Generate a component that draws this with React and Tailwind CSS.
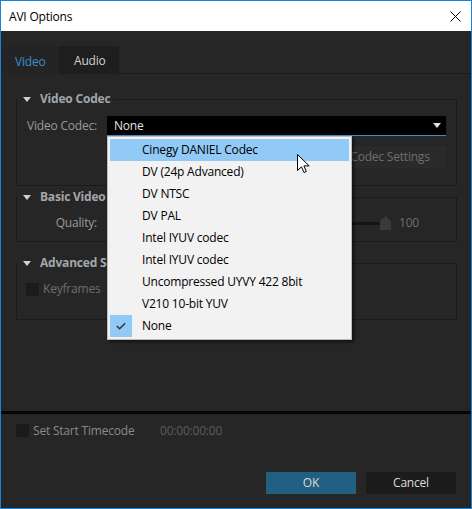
import React from "react";

const items = [
  "Cinegy DANIEL Codec",
  "DV (24p Advanced)",
  "DV NTSC",
  "DV PAL",
  "Intel IYUV codec",
  "Intel IYUV codec",
  "Uncompressed UYVY 422 8bit",
  "V210 10-bit YUV",
  "None",
];

const Tri = ({ className }) => (
  <svg width="8" height="5" viewBox="0 0 8 5" className={className}>
    <path d="M0 0H8L4 5Z" fill="currentColor" />
  </svg>
);

const Section = ({ title, className, children }) => (
  <fieldset className={"ml-[15px] mr-[14px] border border-[#1b1b1b] " + className}>
    <legend className="pl-[6px] pr-[4px]">
      <span className="flex items-center h-[16px] gap-[9px]">
        <Tri className="text-[#d0d0d0]" />
        <span className="font-bold text-[#a3a7ab] leading-[16px] whitespace-nowrap">{title}</span>
      </span>
    </legend>
    {children}
  </fieldset>
);

const Label = ({ children }) => (
  <span className="w-[70px] shrink-0 mr-[10px] text-right whitespace-nowrap text-[#9a9a9a]">{children}</span>
);

export default function App() {
  return (
    <div className="relative w-[472px] h-[509px] border border-[#1883d7] bg-[#262626] flex flex-col font-['Open_Sans',sans-serif] text-[12px] tracking-[-0.2px]">
      {/* title bar */}
      <div className="h-[30px] bg-white flex items-center justify-between pl-[8px] pr-[10px] pt-[1px]">
        <span className="text-black">AVI Options</span>
        <svg width="11" height="11" viewBox="0 0 11 11">
          <path d="M0.5 0.5L10.5 10.5M10.5 0.5L0.5 10.5" stroke="#000" strokeWidth="1" />
        </svg>
      </div>

      {/* tabs */}
      <div className="mt-[15px] flex h-[28px]">
        <div className="w-[59px] bg-[#242424] border-r border-[#1b1b1b] flex items-center pl-[14px] pt-[3px] text-[#3b8ecf]">
          Video
        </div>
        <div className="w-[59px] bg-[#1e1e1e] border-b border-[#1b1b1b] flex items-center pl-[14px] pt-[3px] text-[#d0d0d0]">
          Audio
        </div>
        <div className="flex-1 border-b border-[#1b1b1b]" />
      </div>

      {/* content */}
      <div className="flex-1 pt-[17px]">
        <Section title="Video Codec" className="pb-[17px]">
          <div className="mt-[9px] pl-[10px] mr-[10px] flex items-center h-[20px]">
            <Label>Video Codec:</Label>
            <div className="flex-1 h-[20px] bg-black border-b border-[#3c8cc8] flex items-center justify-between pl-[7px] pr-[5px] text-[#e0e0e0]">
              <span>None</span>
              <Tri className="text-[#e0e0e0]" />
            </div>
          </div>
          <div className="mt-[10px] flex justify-end mr-[10px]">
            <div className="w-[112px] h-[22px] bg-[#2a2a2a] flex items-center justify-center text-[#6e6e6e]">
              Codec Settings
            </div>
          </div>
        </Section>

        <Section title="Basic Video Settings" className="mt-[3px] pb-[11px]">
          <div className="mt-[11px] pl-[10px] mr-[10px] flex items-center h-[14px]">
            <Label>Quality:</Label>
            <div className="flex-1 flex items-center">
              <div className="flex-1 h-[3px] bg-[#141414]" />
              <svg width="11" height="14" viewBox="0 0 11 14">
                <path d="M0 5L5.5 0L11 5V14H0Z" fill="#3a3a3a" />
              </svg>
            </div>
            <span className="ml-[8px] w-[47px] text-[#6e6e6e]">100</span>
          </div>
        </Section>

        <Section title="Advanced Settings" className="mt-[13px] pb-[21px]">
          <div className="mt-[9px] pl-[9px] flex items-center gap-[4px]">
            <div className="w-[13px] h-[13px] bg-[#1b1b1b]" />
            <span className="text-[#6e6e6e]">Keyframes</span>
          </div>
        </Section>
      </div>

      {/* footer */}
      <div className="h-[97px] border-t-[3px] border-[#050505] px-[15px] pt-[10px]">
        <div className="flex items-center h-[13px]">
          <div className="w-[13px] h-[13px] bg-[#1b1b1b]" />
          <span className="ml-[4px] w-[127px] text-[#8a8a8a]">Set Start Timecode</span>
          <span className="text-[#5c5c5c]">00:00:00:00</span>
        </div>
        <div className="mt-[35px] flex justify-end gap-[10px]">
          <div className="w-[90px] h-[22px] bg-[#216080] flex items-center justify-center text-[#dcdcdc]">OK</div>
          <div className="w-[90px] h-[22px] bg-[#1c1c1c] flex items-center justify-center text-[#dcdcdc]">Cancel</div>
        </div>
      </div>

      {/* open dropdown menu */}
      <div className="absolute left-[106px] top-[135px] w-[245px] border border-[#bcbcbc] bg-[#f2f2f2] p-[2px] shadow-[2px_2px_3px_rgba(0,0,0,0.55)]">
        {items.map((it, i) => (
          <div
            key={i}
            className={"h-[22px] flex items-center " + (i === 0 ? "bg-[#91c9f7]" : "")}
          >
            <div className={"w-[22px] h-[22px] flex items-center justify-center " + (i === 8 ? "bg-[#91c9f7]" : "")}>
              {i === 8 && (
                <svg width="10" height="8" viewBox="0 0 10 8">
                  <path d="M0.8 4L3.6 6.8L9.2 1.2" stroke="#333" strokeWidth="1.4" fill="none" />
                </svg>
              )}
            </div>
            <span className="ml-[10px] text-black">{it}</span>
          </div>
        ))}
      </div>

      {/* mouse cursor */}
      <svg className="absolute left-[296px] top-[153px]" width="13" height="20" viewBox="0 0 13 20">
        <path
          d="M0.5 0.5V16.5L4.5 12.8L7 18.5L9.3 17.5L6.9 11.9H12.2Z"
          fill="#fff"
          stroke="#000"
          strokeWidth="1"
          strokeLinejoin="miter"
        />
      </svg>
    </div>
  );
}
